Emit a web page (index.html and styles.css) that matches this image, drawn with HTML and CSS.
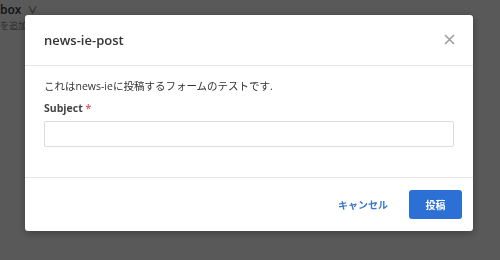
FILE: index.html
```html
<!DOCTYPE html>
<html lang="ja">
<head>
<meta charset="utf-8">
<link rel="stylesheet" href="styles.css">
</head>
<body>
<div class="page">
  <div class="page-title">box <span class="chev">∨</span></div>
  <div class="page-sub">を追加</div>
</div>
<div class="overlay">
  <div class="modal">
    <div class="modal-header">
      <div class="modal-title">news-ie-post</div>
      <button class="close" aria-label="close">
        <svg width="11" height="11" viewBox="0 0 11 11"><path d="M1 1L10 10M10 1L1 10" stroke="#9a9a9a" stroke-width="1.5" fill="none"/></svg>
      </button>
    </div>
    <div class="modal-body">
      <p class="desc">これはnews-ieに投稿するフォームのテストです.</p>
      <label class="label">Subject <span class="req">*</span></label>
      <div class="input"></div>
    </div>
    <div class="modal-footer">
      <button class="btn-cancel">キャンセル</button>
      <button class="btn-primary">投稿</button>
    </div>
  </div>
</div>
</body>
</html>
```
FILE: styles.css
```css
html, body {
  margin: 0;
  padding: 0;
  width: 500px;
  height: 260px;
  overflow: hidden;
  font-family: "Open Sans", "Noto Sans CJK JP", sans-serif;
}
.page {
  background: #e9e9e9;
  height: 260px;
  color: #333;
  padding-top: 1px;
  box-sizing: border-box;
}
.page-title {
  font-size: 12px;
  font-weight: 600;
  line-height: 18px;
}
.chev { font-size: 10px; color: #777; margin-left: 3px; }
.page-sub {
  font-size: 9px;
  color: #777;
  line-height: 14px;
  margin-top: 0;
}
.overlay {
  position: fixed;
  inset: 0;
  background: rgba(0, 0, 0, 0.62);
  display: flex;
  justify-content: flex-start;
  align-items: flex-start;
  padding: 15px 0 0 25px;
}
.modal {
  width: 448px;
  background: #fff;
  border-radius: 3px;
  box-shadow: 0 2px 8px rgba(0,0,0,0.3);
}
.modal-header {
  height: 50px;
  display: flex;
  align-items: center;
  justify-content: space-between;
  padding: 0 18px 0 19px;
  border-bottom: 1px solid #e6e6e6;
}
.modal-title {
  font-size: 13px;
  color: #333;
  font-weight: 600;
  margin-top: -1px;
}
.close {
  border: none;
  background: none;
  padding: 0;
  width: 11px;
  height: 11px;
  display: flex;
  margin-top: -2px;
}
.modal-body {
  padding: 12px 19px 30px;
  border-bottom: 1px solid #e6e6e6;
}
.desc {
  margin: 0;
  font-size: 10.5px;
  color: #333;
  line-height: 17px;
}
.label {
  display: block;
  margin-top: 5px;
  font-size: 10.5px;
  font-weight: 700;
  color: #444;
  line-height: 17px;
}
.req { color: #e0656b; }
.input {
  margin-top: 4px;
  height: 24px;
  border: 1px solid #dcdcdc;
  border-radius: 2px;
}
.modal-footer {
  height: 53px;
  display: flex;
  align-items: center;
  justify-content: flex-end;
  padding: 0 11px 0 19px;
  gap: 21px;
}
.btn-cancel {
  border: none;
  background: none;
  font-family: "Noto Sans CJK JP", sans-serif;
  font-size: 10px;
  font-weight: 700;
  color: #3b77c7;
  padding: 0;
}
.btn-primary {
  border: none;
  background: #2c6fd5;
  color: #fff;
  font-family: "Noto Sans CJK JP", sans-serif;
  font-size: 10px;
  font-weight: 700;
  width: 53px;
  height: 29px;
  border-radius: 3px;
  padding: 0;
}
```
